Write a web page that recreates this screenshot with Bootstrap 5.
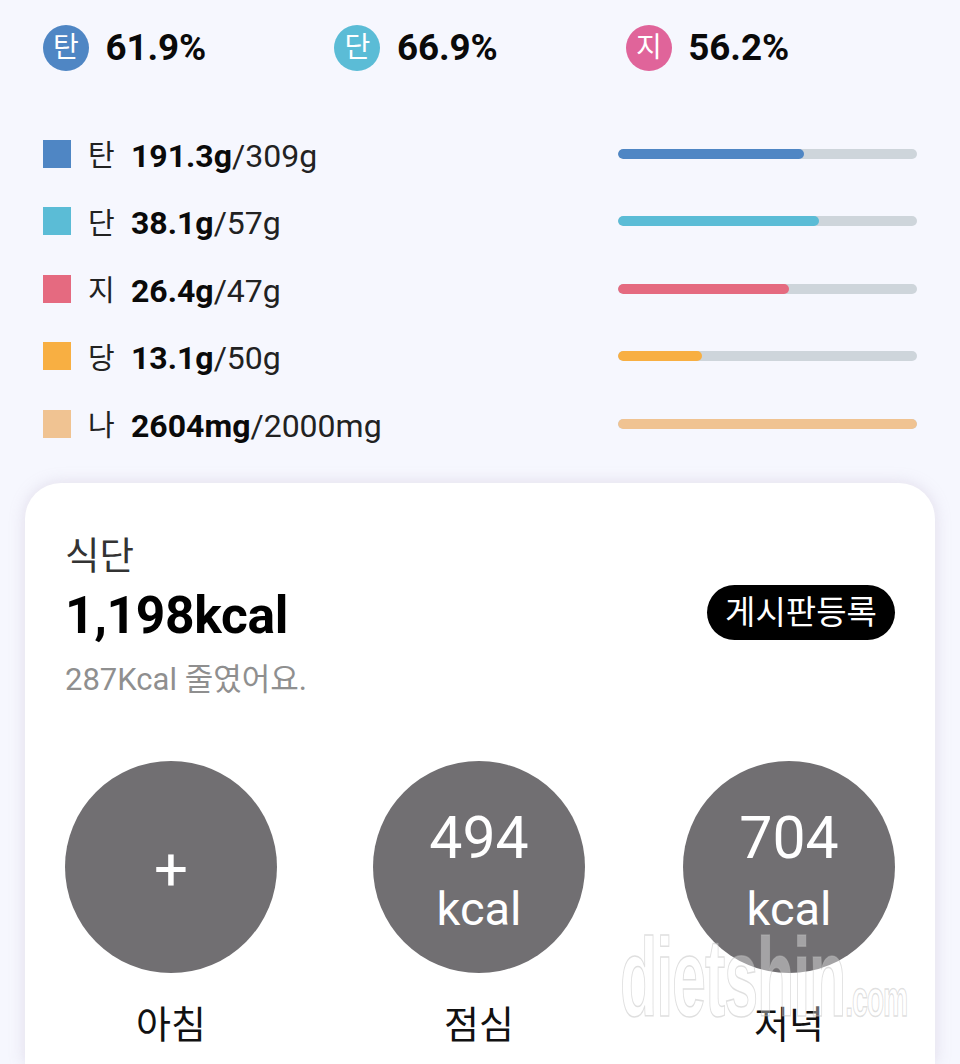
<!DOCTYPE html>
<html lang="ko">
<head>
<meta charset="utf-8">
<title>식단</title>
<link rel="stylesheet" href="https://cdn.jsdelivr.net/npm/bootstrap@5.3.0/dist/css/bootstrap.min.css">
<style>
html,body{height:1064px;overflow:hidden}
body{background:#f6f7fe;font-family:Roboto,"Noto Sans CJK KR",sans-serif;color:#000;position:relative}
.ratio-row{padding:25px 0 0 43px}
.ratio-item{width:291.4px;gap:16.5px}
.ratio-dot{width:46px;height:46px;border-radius:50%;color:#fff;font-size:28px;line-height:1}
.ratio-val{font-size:36.8px;font-weight:700;line-height:46px;color:#0a0a0a;letter-spacing:-.1px}
.nut-list{padding:49px 43px 0 43px;height:412px}
.nut-row{height:67.5px}
.nut-sq{width:28px;height:28px;flex:none}
.nut-name{font-size:29px;width:43px;margin-left:17px;margin-top:6px;color:#222;line-height:1;flex:none}
.nut-val{font-size:32px;color:#222;line-height:1;flex:1;margin-top:4px}
.nut-val b{font-weight:700;color:#0a0a0a}
.nut-track{width:299.5px;height:10px;background:#ced5db;border-radius:5px;flex:none;overflow:hidden}
.nut-fill{height:100%;border-radius:5px}
.c-blue{background:#4f86c4}.c-cyan{background:#5bbcd6}.c-red{background:#e56a80}.c-yellow{background:#f8af42}.c-peach{background:#f0c392}.c-pink{background:#e0649a}
.meal-card{margin:0 25px;height:581px;background:#fff;border-radius:36px 36px 0 0;box-shadow:0 0 16px rgba(170,150,180,.28);padding:47px 40px 0}
.meal-title{font-size:37.5px;line-height:52px;color:#333}
.meal-total{font-size:51.5px;font-weight:700;line-height:58px;margin-top:5px;letter-spacing:-.3px}
.meal-diff{font-size:31px;line-height:44px;color:#8f8f8f;margin-top:13px}
.btn-board{background:#000;color:#fff;font-size:33px;border-radius:28px;height:55px;width:188px;padding:0;line-height:1;border:0;margin-bottom:5px}
.btn-board:hover{background:#000;color:#fff}
.meal-list{margin-top:59px}
.meal-col{width:212px}
.meal-col-mid{margin-right:2px}
.meal-circle{width:212px;height:212px;border-radius:50%;background:#716f72;color:#fff;line-height:1}
.meal-stack{padding-top:8px}
.meal-num{font-size:59px;line-height:70px}
.meal-unit{font-size:47px;line-height:60px;margin-top:6px}
.meal-plus{font-size:60px;line-height:1;font-weight:400;padding-top:6px}
.meal-label{font-size:38px;line-height:46px;margin-top:29px;color:#111}
.wm{position:absolute;left:620px;top:922px;font-family:"Liberation Sans",sans-serif;font-size:112px;line-height:1;font-weight:700;color:rgba(255,255,255,.36);-webkit-text-stroke:1.5px rgba(185,185,185,.45);transform-origin:0 0;transform:scaleX(.545);white-space:nowrap;pointer-events:none;letter-spacing:-2px}
.wm span{font-size:52px}
</style>
</head>
<body>
<div class="d-flex ratio-row">
  <div class="d-flex align-items-center ratio-item"><span class="d-flex align-items-center justify-content-center ratio-dot c-blue">탄</span><span class="ratio-val">61.9%</span></div>
  <div class="d-flex align-items-center ratio-item"><span class="d-flex align-items-center justify-content-center ratio-dot c-cyan">단</span><span class="ratio-val">66.9%</span></div>
  <div class="d-flex align-items-center ratio-item"><span class="d-flex align-items-center justify-content-center ratio-dot c-pink">지</span><span class="ratio-val">56.2%</span></div>
</div>
<div class="nut-list">
  <div class="d-flex align-items-center nut-row"><span class="nut-sq c-blue"></span><span class="nut-name">탄</span><span class="nut-val"><b>191.3g</b>/309g</span><div class="nut-track"><div class="nut-fill c-blue" style="width:62.3%"></div></div></div>
  <div class="d-flex align-items-center nut-row"><span class="nut-sq c-cyan"></span><span class="nut-name">단</span><span class="nut-val"><b>38.1g</b>/57g</span><div class="nut-track"><div class="nut-fill c-cyan" style="width:67.2%"></div></div></div>
  <div class="d-flex align-items-center nut-row"><span class="nut-sq c-red"></span><span class="nut-name">지</span><span class="nut-val"><b>26.4g</b>/47g</span><div class="nut-track"><div class="nut-fill c-red" style="width:57.3%"></div></div></div>
  <div class="d-flex align-items-center nut-row"><span class="nut-sq c-yellow"></span><span class="nut-name">당</span><span class="nut-val"><b>13.1g</b>/50g</span><div class="nut-track"><div class="nut-fill c-yellow" style="width:28.2%"></div></div></div>
  <div class="d-flex align-items-center nut-row"><span class="nut-sq c-peach"></span><span class="nut-name">나</span><span class="nut-val"><b>2604mg</b>/2000mg</span><div class="nut-track"><div class="nut-fill c-peach" style="width:100%"></div></div></div>
</div>
<div class="meal-card">
  <div class="d-flex justify-content-between align-items-end">
    <div>
      <div class="meal-title">식단</div>
      <div class="meal-total">1,198kcal</div>
    </div>
    <button class="btn btn-board" type="button">게시판등록</button>
  </div>
  <div class="meal-diff">287Kcal 줄였어요.</div>
  <div class="d-flex justify-content-between meal-list">
    <div class="meal-col text-center"><div class="meal-circle d-flex align-items-center justify-content-center"><span class="meal-plus">+</span></div><div class="meal-label">아침</div></div>
    <div class="meal-col meal-col-mid text-center"><div class="meal-circle meal-stack d-flex flex-column align-items-center justify-content-center"><span class="meal-num">494</span><span class="meal-unit">kcal</span></div><div class="meal-label">점심</div></div>
    <div class="meal-col text-center"><div class="meal-circle meal-stack d-flex flex-column align-items-center justify-content-center"><span class="meal-num">704</span><span class="meal-unit">kcal</span></div><div class="meal-label">저녁</div></div>
  </div>
</div>
<div class="wm">dietshin<span>.com</span></div>
</body>
</html>
